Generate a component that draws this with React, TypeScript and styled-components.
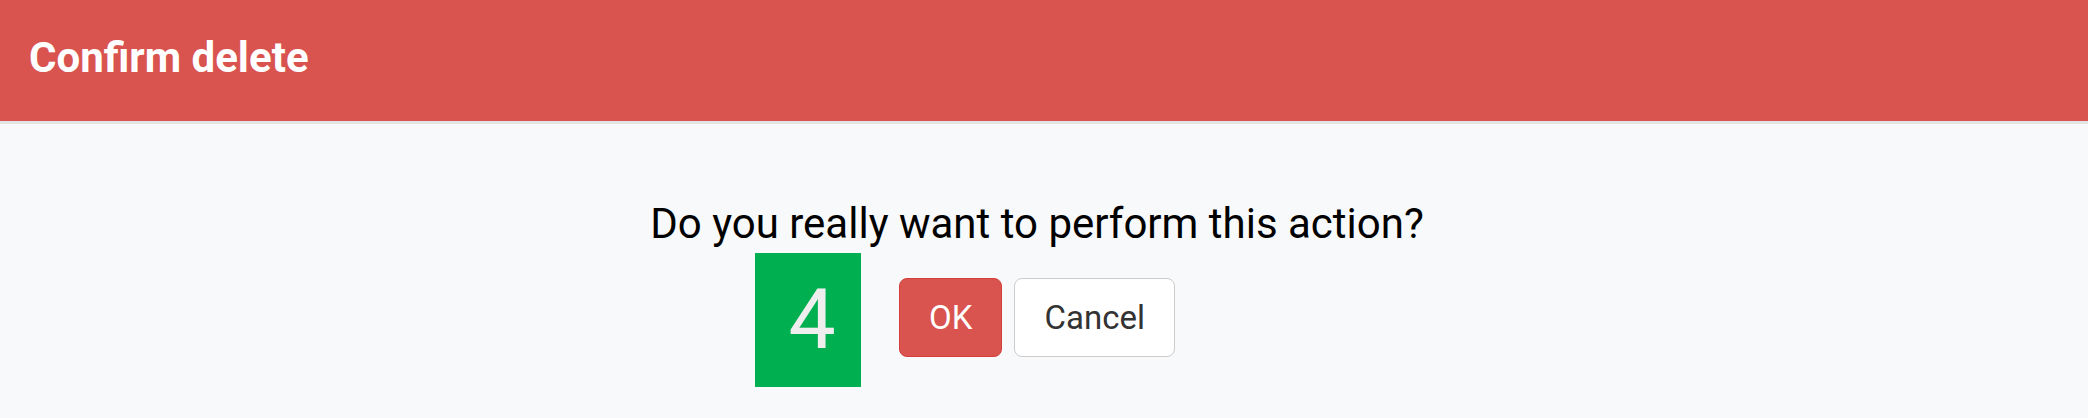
import React from 'react';
import styled, { createGlobalStyle } from 'styled-components';

const GlobalStyle = createGlobalStyle`
  html,
  body {
    margin: 0;
    padding: 0;
    background-color: #f8f9fa;
    font-family: Roboto, 'Liberation Sans', Arial, sans-serif;
  }
`;

const Dialog = styled.div`
  display: flex;
  flex-direction: column;
  width: 100%;
  height: 418px;
  background-color: #f8f9fa;
`;

const Header = styled.header`
  display: flex;
  align-items: flex-start;
  height: 121px;
  padding: 0 29px;
  background-color: #d9534f;
  border-bottom: 3px solid #e3e4e4;
`;

const Title = styled.h4`
  margin: 0;
  font-size: 42px;
  font-weight: 700;
  line-height: 115px;
  color: #ffffff;
`;

const Body = styled.main`
  display: flex;
  flex-direction: column;
  align-items: center;
  padding: 75px 14px 0 0;
`;

const Question = styled.p`
  margin: 0 0 4px;
  font-size: 42px;
  line-height: 1.2;
  color: #000000;
`;

const ActionRow = styled.div`
  display: grid;
  grid-template-columns: 1fr auto 1fr;
  align-items: start;
  width: 100%;
`;

const Countdown = styled.div`
  justify-self: end;
  display: flex;
  align-items: center;
  justify-content: center;
  box-sizing: border-box;
  width: 106px;
  height: 134px;
  margin-right: 38px;
  padding-left: 8px;
  background-color: #00b050;
  color: #eeeeee;
  font-size: 84px;
  line-height: 1;
`;

const Buttons = styled.div`
  display: flex;
  gap: 12px;
  margin-top: 25px;
`;

const Button = styled.button<{ $variant: 'danger' | 'default' }>`
  padding: 15px 29px;
  font-family: Roboto, 'Liberation Sans', Arial, sans-serif;
  font-size: 33px;
  line-height: 47px;
  border-radius: 8px;
  border: 1px solid ${(p) => (p.$variant === 'danger' ? '#d43f3a' : '#cccccc')};
  background-color: ${(p) => (p.$variant === 'danger' ? '#d9534f' : '#ffffff')};
  color: ${(p) => (p.$variant === 'danger' ? '#ffffff' : '#333333')};
  cursor: pointer;
`;

function App() {
  return (
    <>
      <GlobalStyle />
      <Dialog>
        <Header>
          <Title>Confirm delete</Title>
        </Header>
        <Body>
          <Question>Do you really want to perform this action?</Question>
          <ActionRow>
            <Countdown>4</Countdown>
            <Buttons>
              <Button $variant="danger">OK</Button>
              <Button $variant="default">Cancel</Button>
            </Buttons>
          </ActionRow>
        </Body>
      </Dialog>
    </>
  );
}

export default App;
